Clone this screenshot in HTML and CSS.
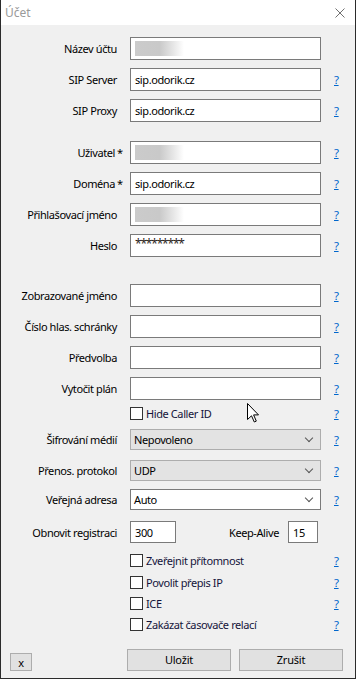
FILE: index.html
```html
<!DOCTYPE html>
<html>
<head>
    <title>Účet</title>
    <link rel="stylesheet" href="styles.css">
</head>
<body>
<div class="window">
    <div class="titlebar">
        <span class="title">Účet</span>
        <svg class="close" width="10" height="10" viewBox="0 0 10 10">
            <path d="M0.5 0.5 L9.5 9.5 M9.5 0.5 L0.5 9.5" stroke="#707070" stroke-width="1" fill="none"/>
        </svg>
    </div>
    <div class="content">
        <div class="row">
            <label>Název účtu</label>
            <div class="field"><span class="blur"></span></div>
            <span></span>
        </div>
        <div class="row">
            <label>SIP Server</label>
            <div class="field">sip.odorik.cz</div>
            <a class="help">?</a>
        </div>
        <div class="row">
            <label>SIP Proxy</label>
            <div class="field">sip.odorik.cz</div>
            <a class="help">?</a>
        </div>

        <div class="row section">
            <label>Uživatel<span class="req">*</span></label>
            <div class="field"><span class="blur"></span></div>
            <a class="help">?</a>
        </div>
        <div class="row">
            <label>Doména<span class="req">*</span></label>
            <div class="field">sip.odorik.cz</div>
            <a class="help">?</a>
        </div>
        <div class="row">
            <label>Přihlašovací jméno</label>
            <div class="field"><span class="blur"></span></div>
            <a class="help">?</a>
        </div>
        <div class="row">
            <label>Heslo</label>
            <div class="field"><span class="stars">*********</span></div>
            <a class="help">?</a>
        </div>

        <div class="row section-lg">
            <label>Zobrazované jméno</label>
            <div class="field"></div>
            <a class="help">?</a>
        </div>
        <div class="row">
            <label>Číslo hlas. schránky</label>
            <div class="field"></div>
            <a class="help">?</a>
        </div>
        <div class="row">
            <label>Předvolba</label>
            <div class="field"></div>
            <a class="help">?</a>
        </div>
        <div class="row">
            <label>Vytočit plán</label>
            <div class="field"></div>
            <a class="help">?</a>
        </div>
        <div class="row check-row first-check">
            <span></span>
            <div class="check"><span class="box"></span>Hide Caller ID</div>
            <a class="help">?</a>
        </div>

        <div class="row select-row sel-1">
            <label>Šifrování médií</label>
            <div class="select">Nepovoleno<span class="chev"></span></div>
            <a class="help">?</a>
        </div>
        <div class="row select-row sel-2">
            <label>Přenos. protokol</label>
            <div class="select">UDP<span class="chev"></span></div>
            <a class="help">?</a>
        </div>
        <div class="row select-row sel-3">
            <label>Veřejná adresa</label>
            <div class="select light">Auto<span class="chev"></span></div>
            <a class="help">?</a>
        </div>
        <div class="row timers">
            <label>Obnovit registraci</label>
            <div class="pair">
                <div class="field small">300</div>
                <span class="pair-label">Keep-Alive</span>
                <div class="field tiny">15</div>
            </div>
            <span></span>
        </div>

        <div class="row check-row c1">
            <span></span>
            <div class="check"><span class="box"></span>Zveřejnit přítomnost</div>
            <a class="help">?</a>
        </div>
        <div class="row check-row c2">
            <span></span>
            <div class="check"><span class="box"></span>Povolit přepis IP</div>
            <a class="help">?</a>
        </div>
        <div class="row check-row c3">
            <span></span>
            <div class="check"><span class="box"></span>ICE</div>
            <a class="help">?</a>
        </div>
        <div class="row check-row c3">
            <span></span>
            <div class="check"><span class="box"></span>Zakázat časovače relací</div>
            <a class="help">?</a>
        </div>

        <div class="footer">
            <button class="btn mini">x</button>
            <button class="btn wide push">Uložit</button>
            <button class="btn wide">Zrušit</button>
        </div>
    </div>

    <svg class="cursor" width="12" height="20" viewBox="0 0 12 20">
        <path d="M0.5 0.5 L0.5 16.5 L4.5 12.8 L7.3 19 L9.3 18.1 L6.6 11.9 L11.5 11.9 Z" fill="#fff" stroke="#000" stroke-width="1" stroke-linejoin="miter"/>
    </svg>
</div>
</body>
</html>
```

FILE: styles.css
```css
body {
    margin: 0;
    font-family: "Noto Sans", "Open Sans", sans-serif;
    font-size: 11px;
    letter-spacing: -0.4px;
    color: #000;
}

.window {
    position: relative;
    width: 356px;
    height: 679px;
    box-sizing: border-box;
    border: 1px solid #2b2b2b;
    border-top: none;
    background: #f0f0f0;
    overflow: hidden;
}

.titlebar {
    height: 25px;
    background: #fff;
    display: flex;
    align-items: center;
    justify-content: space-between;
    padding: 0 10px 0 4px;
}

.title {
    font-size: 12px;
    letter-spacing: 0;
    color: #9a9a9a;
    margin-top: -1px;
}

.close {
    display: block;
}

.content {
    padding-top: 12px;
}

.row {
    display: grid;
    grid-template-columns: 116px 191px 1fr;
    column-gap: 13px;
    align-items: center;
    height: 23px;
    margin-top: 8px;
}

.row:first-child {
    margin-top: 0;
}

.row.section {
    margin-top: 19px;
}

.row.section-lg {
    margin-top: 27px;
}

.row label {
    text-align: right;
    white-space: nowrap;
}

.req {
    display: inline-block;
    width: 0;
    margin-left: 2px;
}

.field {
    height: 23px;
    box-sizing: border-box;
    border: 1px solid #7a7a7a;
    background: #fff;
    padding-left: 4px;
    display: flex;
    align-items: center;
}

.blur {
    display: block;
    width: 49px;
    height: 15px;
    background: linear-gradient(90deg, #cbcbcb 0%, #c9c9c9 50%, #e6e6e6 78%, #fff 100%);
}

.stars {
    font-size: 12px;
    letter-spacing: -1.2px;
    color: #2a2218;
    margin-top: -5px;
}

.help {
    color: #0066cc;
    text-decoration: underline;
    font-size: 11.5px;
}

.check-row {
    height: 13px;
    line-height: 13px;
}

.first-check {
    margin-top: 7px;
}

.check {
    display: flex;
    align-items: center;
    color: #14143a;
}

.box {
    width: 13px;
    height: 13px;
    box-sizing: border-box;
    border: 1px solid #333;
    background: #fff;
    margin-right: 3px;
}

.select-row {
    height: 21px;
}

.sel-1 {
    margin-top: 9px;
}

.sel-2 {
    margin-top: 10px;
}

.sel-3 {
    margin-top: 8px;
}

.select {
    height: 21px;
    box-sizing: border-box;
    border: 1px solid #adadad;
    background: #e3e3e3;
    padding-left: 3px;
    display: flex;
    align-items: center;
    justify-content: space-between;
}

.select.light {
    background: #fff;
    border-color: #7a7a7a;
}

.chev {
    width: 5px;
    height: 5px;
    border-right: 1px solid #555;
    border-bottom: 1px solid #555;
    transform: rotate(45deg);
    margin: -4px 8px 0 0;
}

.timers {
    height: 22px;
    margin-top: 11px;
}

.pair {
    display: flex;
    align-items: center;
}

.field.small {
    width: 46px;
    height: 22px;
}

.field.tiny {
    width: 30px;
    height: 22px;
    margin-right: 3px;
}

.pair-label {
    margin-left: auto;
    margin-right: 9px;
}

.c1 {
    margin-top: 11px;
}

.c2 {
    margin-top: 9px;
}

.c3 {
    margin-top: 8px;
}

.footer {
    display: flex;
    align-items: center;
    margin-top: 17px;
    padding: 0 12px 0 9px;
}

.btn {
    font-family: inherit;
    font-size: 11px;
    letter-spacing: -0.2px;
    color: #000;
    background: #e1e1e1;
    border: 1px solid #adadad;
    padding: 0;
    margin: 0;
}

.btn.mini {
    width: 22px;
    height: 18px;
    margin-top: 5px;
}

.btn.wide {
    width: 104px;
    height: 22px;
}

.btn.push {
    margin-left: auto;
    margin-right: 8px;
}

.cursor {
    position: absolute;
    left: 246px;
    top: 403px;
}
```
